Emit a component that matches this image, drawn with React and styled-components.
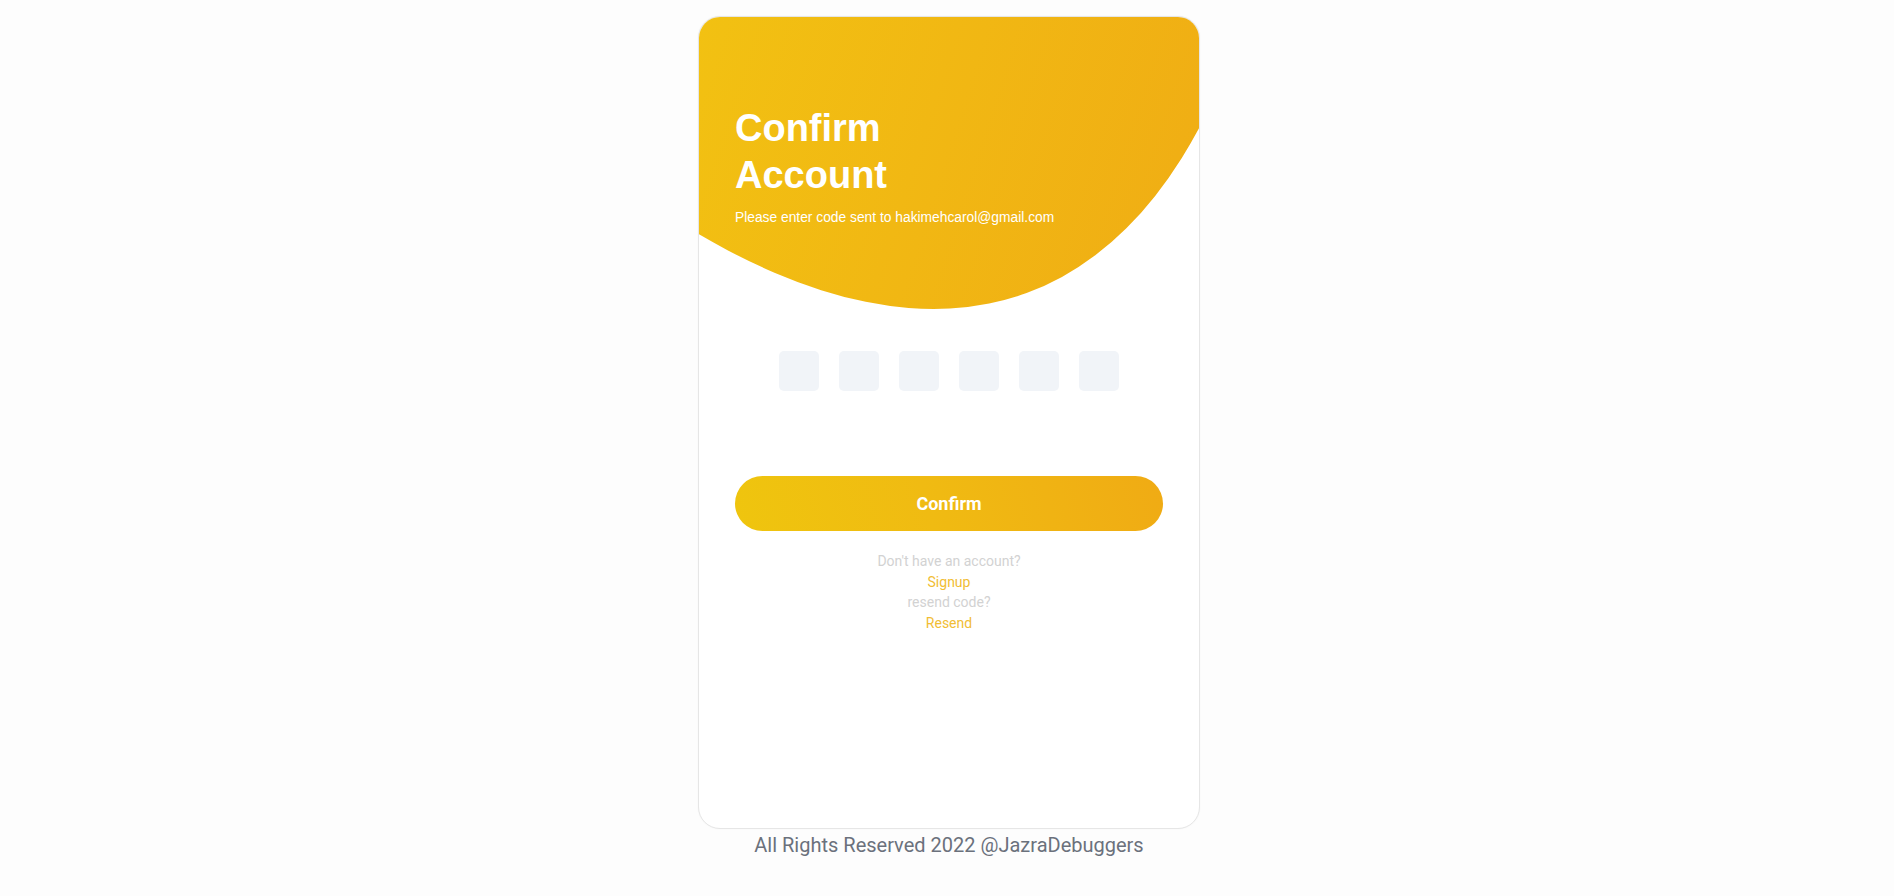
import React from 'react';
import styled, { createGlobalStyle } from 'styled-components';

const GlobalStyle = createGlobalStyle`
	* {
		box-sizing: border-box;
	}

	body {
		margin: 0;
		background: #fdfdfd;
		font-family: Roboto, 'Liberation Sans', sans-serif;
	}
`;

const Page = styled.div`
	display: flex;
	flex-direction: column;
	align-items: center;
	padding: 16px 0 0 4px;
`;

const Card = styled.div`
	position: relative;
	overflow: hidden;
	width: 502px;
	height: 813px;
	padding: 88px 36px 0;
	background: #ffffff;
	border: 1px solid #e6e6e6;
	border-radius: 22px;
	box-shadow: 0 0 2px rgba(0, 0, 0, 0.04);
`;

const WaveSvg = styled.svg`
	position: absolute;
	left: 0;
	top: 0;
	display: block;
`;

// big tilted ellipse, only its lower tip shows inside the card
const Wave = () => (
	<WaveSvg width='500' height='320' viewBox='0 0 500 320'>
		<defs>
			<linearGradient
				id='waveFill'
				gradientUnits='userSpaceOnUse'
				x1='0'
				y1='0'
				x2='500'
				y2='160'
			>
				<stop offset='0' stopColor='#f2c112' />
				<stop offset='1' stopColor='#f0ae14' />
			</linearGradient>
			<clipPath id='waveClip'>
				<ellipse
					cx='-513'
					cy='-2021'
					rx='790'
					ry='2446'
					transform='rotate(-20.1 -513 -2021)'
				/>
			</clipPath>
		</defs>
		<rect
			width='500'
			height='320'
			fill='url(#waveFill)'
			clipPath='url(#waveClip)'
		/>
	</WaveSvg>
);

const Header = styled.div`
	position: relative;
	color: #ffffff;
	font-family: 'Liberation Sans', Arial, sans-serif;

	h1 {
		margin: 0;
		font-size: 38px;
		line-height: 47px;
		font-weight: 700;
	}

	p {
		margin: 11px 0 0;
		font-size: 13.8px;
		line-height: 16px;
	}
`;

const OtpRow = styled.div`
	position: relative;
	display: flex;
	justify-content: center;
	gap: 20px;
	margin-top: 125px;
`;

const OtpBox = styled.input`
	width: 40px;
	height: 40px;
	border: none;
	border-radius: 5px;
	background: #f1f4f8;
	outline: none;
	text-align: center;
	font-family: Roboto, sans-serif;
	font-size: 18px;
`;

const ConfirmButton = styled.button`
	display: block;
	width: 100%;
	height: 55px;
	margin-top: 85px;
	border: none;
	border-radius: 28px;
	background: linear-gradient(75deg, #efc50e 0%, #f0bb12 45%, #f0ab14 100%);
	color: #ffffff;
	font-family: Roboto, sans-serif;
	font-size: 18px;
	font-weight: 700;
	cursor: pointer;
`;

const Links = styled.div`
	display: flex;
	flex-direction: column;
	align-items: center;
	margin-top: 20px;
	font-size: 14px;
	line-height: 20.5px;
`;

const Muted = styled.span`
	color: #d2d2d2;
`;

const Action = styled.a`
	color: #f1bd34;
	text-decoration: none;
	cursor: pointer;
`;

const Footer = styled.p`
	margin: 1px 0 0;
	color: #6b717c;
	font-size: 20px;
	line-height: 30px;
`;

const App = () => {
	const digits = [0, 1, 2, 3, 4, 5];

	return (
		<>
			<GlobalStyle />
			<Page>
				<Card>
					<Wave />
					<Header>
						<h1>
							Confirm
							<br />
							Account
						</h1>
						<p>Please enter code sent to hakimehcarol@gmail.com</p>
					</Header>
					<OtpRow>
						{digits.map((d) => (
							<OtpBox key={d} maxLength={1} />
						))}
					</OtpRow>
					<ConfirmButton>Confirm</ConfirmButton>
					<Links>
						<Muted>Don't have an account?</Muted>
						<Action>Signup</Action>
						<Muted>resend code?</Muted>
						<Action>Resend</Action>
					</Links>
				</Card>
				<Footer>All Rights Reserved 2022 @JazraDebuggers</Footer>
			</Page>
		</>
	);
};

export default App;
